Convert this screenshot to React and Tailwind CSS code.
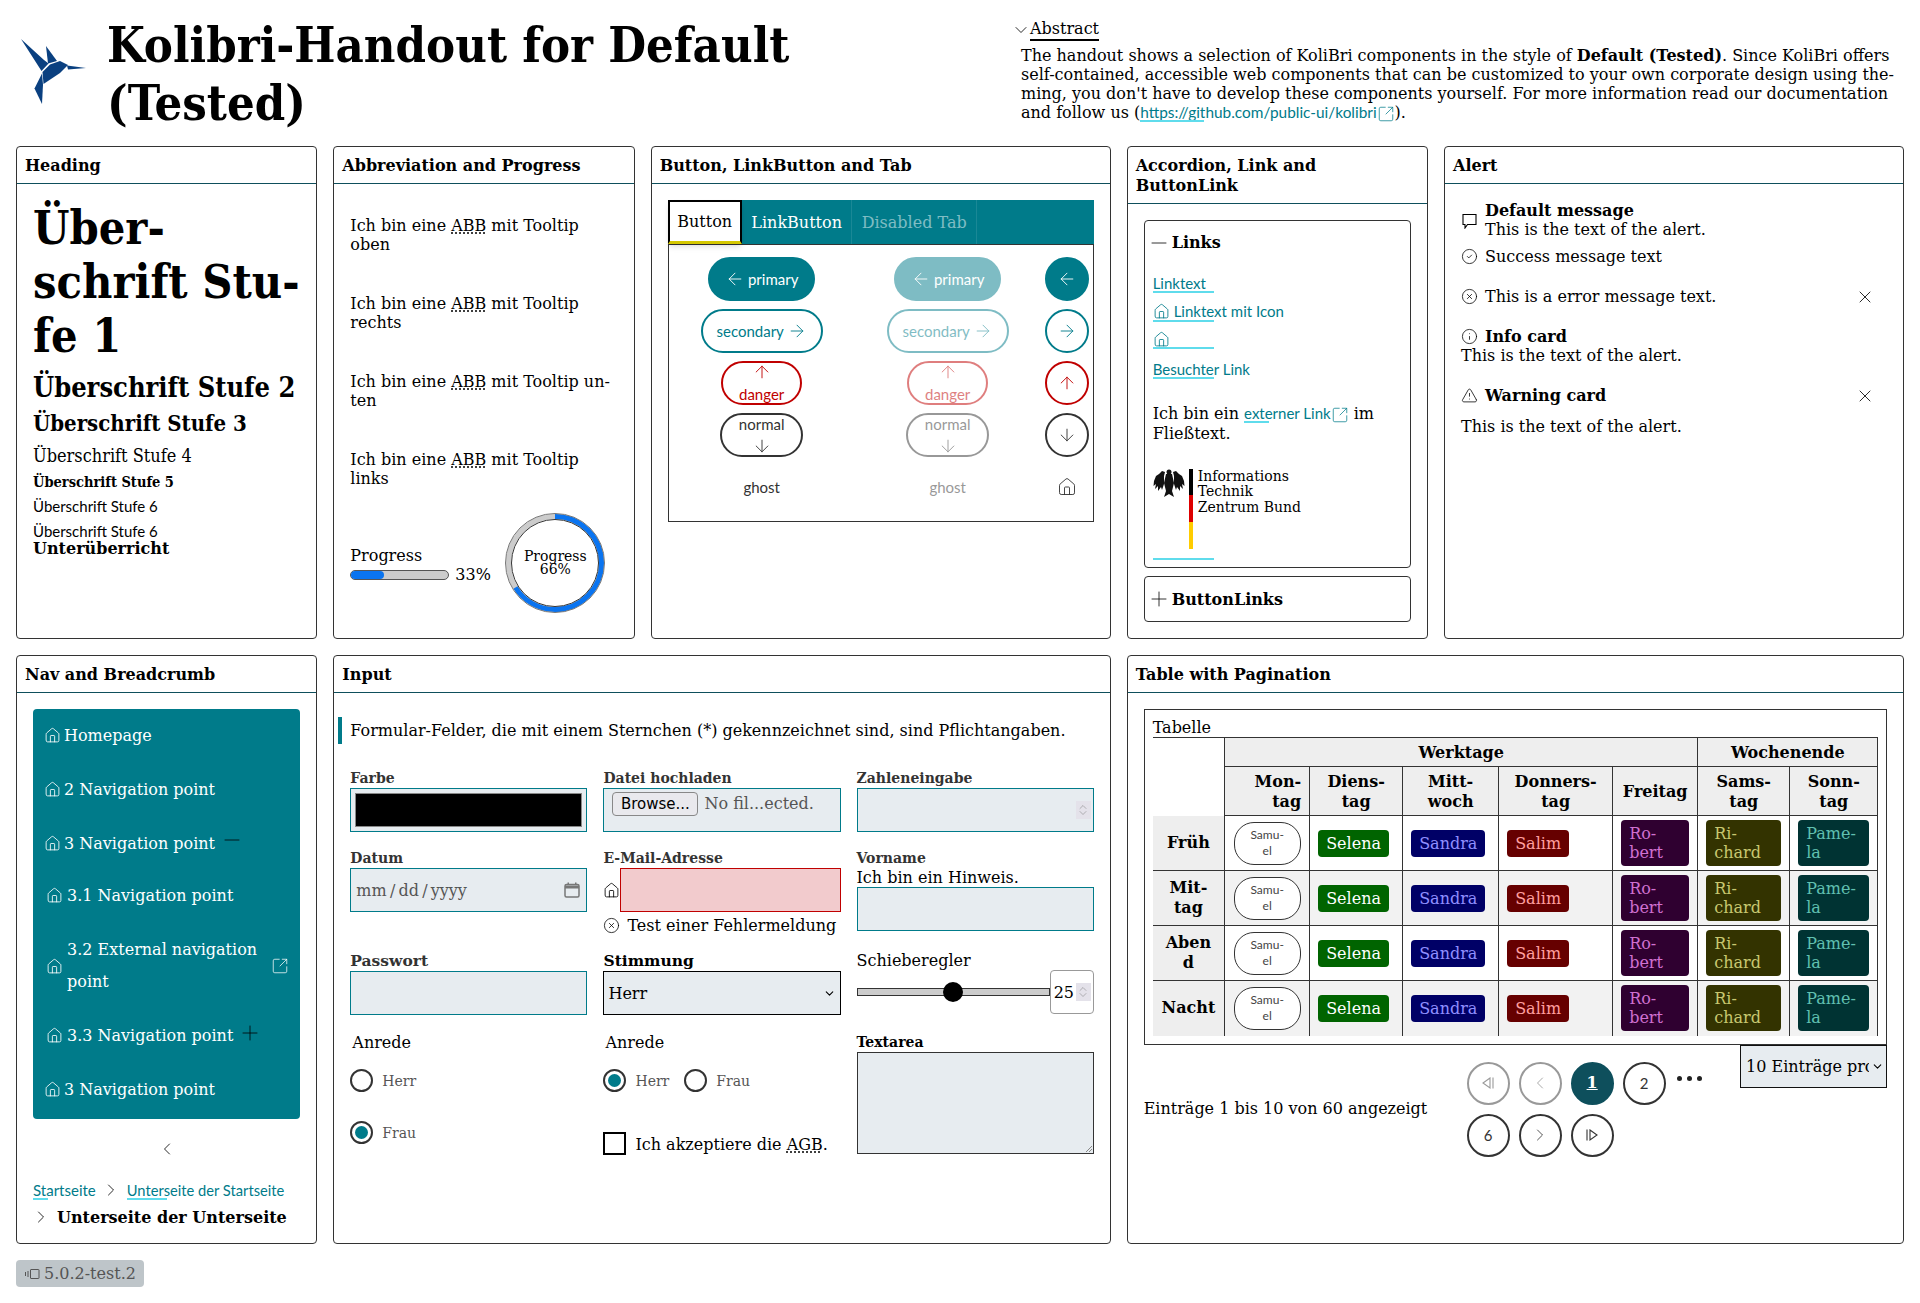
import { ArrowLeft, ArrowRight, ArrowUp, ArrowDown, House, ChevronDown, ChevronLeft, ChevronRight, ChevronUp, SquareArrowOutUpRight, Minus, Plus, X, CircleCheck, CircleX, Info, TriangleAlert } from "lucide-react";

const serif = "font-['DejaVu_Serif',serif]";
const head = "font-['DejaVu_Serif_Condensed','DejaVu_Serif',serif]";
const sans = "font-['Lato',sans-serif]";

function Hummingbird() {
  return (
    <svg width="70" height="68" viewBox="18 37 70 68" className="shrink-0">
      <g fill="#0a4080">
        <path d="M21 39 L44 60 L48.5 63.5 L41.5 71 Z" />
        <path d="M46 46 L57 61 L48 63.5 Z" />
        <path d="M42.5 72 L50 64.5 L60 61 L68 65 L60 73 L43.5 84 Z" />
        <path d="M67 65.5 L86 68 L68 69.5 Z" />
        <path d="M42 73.5 L34.5 88.5 L42 104 L43 84.5 Z" />
      </g>
    </svg>
  );
}

function Eagle() {
  return (
    <svg width="32" height="30" viewBox="0 0 32 30" className="shrink-0">
      <g fill="#111">
        <circle cx="16" cy="3" r="2.5" />
        <path d="M13 5 L19 5 L21 14 L19 22 L21 28 L16 25 L11 28 L13 22 L11 14 Z" />
        <path d="M12 3 L9 2 L6 5 L3 7 L1 12 L0.5 17 L3 15 L2 20 L5 17 L5 22 L8 18 L9 21 L11 15 L11 7 Z" />
        <path d="M20 3 L23 2 L26 5 L29 7 L31 12 L31.5 17 L29 15 L30 20 L27 17 L27 22 L24 18 L23 21 L21 15 L21 7 Z" />
      </g>
    </svg>
  );
}

function SpeechIcon() {
  return (
    <svg width="17" height="17" viewBox="0 0 17 17" fill="none" stroke="currentColor" strokeWidth="1.1" className="shrink-0">
      <path d="M2 2.5 H15 V12.5 H6.5 L4 16 V12.5 H2 Z" />
    </svg>
  );
}

function CalendarIcon() {
  return (
    <svg width="18" height="18" viewBox="0 0 18 18" fill="none" className="text-[#777]">
      <rect x="2" y="3.5" width="14" height="12.5" rx="1.5" stroke="currentColor" strokeWidth="1.5" />
      <path d="M2 4.5 H16 V7.5 H2 Z M4.5 1.5 H6 V4 H4.5 Z M12 1.5 H13.5 V4 H12 Z" fill="currentColor" />
    </svg>
  );
}

function Card({ title, span, children, bodyClass = "" }) {
  return (
    <section className={`${span} flex flex-col rounded border border-[#333] bg-white`}>
      <h2 className="border-b border-[#0e4f5c] px-2 pt-[9px] pb-[7px] text-base leading-[20px] font-bold">{title}</h2>
      <div className={`flex-1 ${bodyClass}`}>{children}</div>
    </section>
  );
}

function TextLink({ children, className = "text-[15px]", line = "w-[61px]" }) {
  return (
    <span className={`relative inline-block leading-[16px] text-[#007b8a] ${sans} ${className}`}>
      {children}
      <span className={`absolute bottom-[-2px] left-0 h-[2px] bg-[#5fdcec] ${line}`} />
    </span>
  );
}

function Abbr({ children }) {
  return <span className="underline decoration-dotted underline-offset-2">{children}</span>;
}

function Pill({ label, tone, icon: Icon, side, dim, w }) {
  const tones = {
    primary: "bg-[#007b8a] border-[#007b8a] text-white",
    secondary: "bg-white border-[#007b8a] text-[#007b8a]",
    danger: "bg-white border-[#c00000] text-[#c00000]",
    normal: "bg-white border-[#333] text-[#333]",
    ghost: "bg-white border-transparent text-[#333]",
  };
  return (
    <div
      className={`flex h-11 items-center justify-center rounded-full border-2 text-[15px] leading-[20px] ${sans} ${tones[tone]} ${w} ${
        dim ? "opacity-50" : ""
      } ${side === "top" || side === "bottom" ? "flex-col gap-[2px]" : "gap-[3px]"}`}
    >
      {Icon && (side === "left" || side === "top") && <Icon size={20} strokeWidth={1.1} className="shrink-0" />}
      {label && <span>{label}</span>}
      {Icon && (side === "right" || side === "bottom") && <Icon size={20} strokeWidth={1.1} className="shrink-0" />}
    </div>
  );
}

function ButtonColumn({ dim }) {
  return (
    <div className="flex flex-col items-center gap-[8px]">
      <Pill label="primary" tone="primary" icon={ArrowLeft} side="left" dim={dim} w="w-[107px]" />
      <Pill label="secondary" tone="secondary" icon={ArrowRight} side="right" dim={dim} w="w-[122px]" />
      <Pill label="danger" tone="danger" icon={ArrowUp} side="top" dim={dim} w="w-[81px]" />
      <Pill label="normal" tone="normal" icon={ArrowDown} side="bottom" dim={dim} w="w-[83px]" />
      <Pill label="ghost" tone="ghost" dim={dim} w="w-[83px]" />
    </div>
  );
}

function NavItem({ children, indent, after, className }) {
  return (
    <div className={`flex items-center text-white ${indent ? "pl-[13px]" : "pl-[11px]"} ${className}`}>
      <House size={17} strokeWidth={1.2} className={`shrink-0 ${indent ? "mr-[4px]" : "mr-[3px]"}`} />
      {children}
      {after}
    </div>
  );
}

function Field({ label, children, labelClass = "text-[14px] leading-[19px] font-bold text-[#333]" }) {
  return (
    <div>
      <div className={labelClass}>{label}</div>
      {children}
    </div>
  );
}

const inputBox = "h-11 w-full border border-[#007b8a] bg-[#e7ecf0]";

function Spin() {
  return (
    <span className="flex h-[18px] w-[15px] flex-col items-center justify-center bg-[#e4e2ea] text-[#777]">
      <ChevronUp size={12} strokeWidth={1} className="mb-[-3px]" />
      <ChevronDown size={12} strokeWidth={1} className="mt-[-3px]" />
    </span>
  );
}

function Radio({ checked, label }) {
  return (
    <div className="flex items-center gap-[9px] text-sm text-[#555]">
      <span className="flex h-[23px] w-[23px] items-center justify-center rounded-full border-2 border-[#333]">
        {checked && <span className="h-[13px] w-[13px] rounded-full bg-[#007b8a]" />}
      </span>
      {label}
    </div>
  );
}

function Th({ children, className = "text-center", ...rest }) {
  return (
    <th className={`border border-[#333] bg-[#eee] px-2 pt-[2px] font-bold leading-[20px] ${className}`} {...rest}>
      {children}
    </th>
  );
}

function Chip({ cls, className = "", children }) {
  return <span className={`block rounded text-left leading-[19px] ${cls} ${className}`}>{children}</span>;
}

function TableRow({ label, even, last }) {
  const cell = `border border-[#333] px-2 ${last ? "border-b-0" : ""} ${even ? "bg-[#f2f2f2]" : "bg-white"}`;
  return (
    <tr className="h-[55px]">
      <th className={`border-r border-b border-[#333] bg-[#eee] text-center leading-[20px] font-bold ${last ? "border-b-0" : ""}`}>{label}</th>
      <td className={`${cell} !px-0`}>
        <span className={`mx-auto flex h-[43px] w-[67px] items-center justify-center rounded-[20px] border border-[#333] bg-white text-center text-[12px] leading-[16px] text-[#444] ${sans}`}>
          Samu-
          <br />
          el
        </span>
      </td>
      <td className={cell}>
        <Chip cls="bg-[#006400] text-white" className="w-[71px] py-1 pl-2">Selena</Chip>
      </td>
      <td className={cell}>
        <Chip cls="bg-[#000066] text-[#8f8fff]" className="w-[74px] py-1 pl-2">Sandra</Chip>
      </td>
      <td className={cell}>
        <Chip cls="bg-[#660000] text-[#ff9f9f]" className="w-[62px] py-1 pl-2">Salim</Chip>
      </td>
      <td className={cell}>
        <Chip cls="bg-[#2f0030] text-[#d070d0]" className="w-[68px] py-1 pl-2">Ro-<br />bert</Chip>
      </td>
      <td className={cell}>
        <Chip cls="bg-[#333300] text-[#c8c870]" className="w-[75px] py-1 pl-2">Ri-<br />chard</Chip>
      </td>
      <td className={cell}>
        <Chip cls="bg-[#003333] text-[#60c0b0]" className="w-[71px] py-1 pl-2">Pame-<br />la</Chip>
      </td>
    </tr>
  );
}

function Page({ children, dim, active }) {
  return (
    <span
      className={`flex h-[43px] w-[43px] items-center justify-center rounded-full border-2 ${
        active ? `border-[#0e4f5c] bg-[#0e4f5c] text-base font-bold text-white underline ${serif}` : dim ? `border-[#999] text-[15px] text-[#999] ${sans}` : `border-[#333] text-[15px] text-[#333] ${sans}`
      }`}
    >
      {children}
    </span>
  );
}

function FirstIcon() {
  return (
    <svg width="14" height="14" viewBox="0 0 14 14" fill="none" stroke="currentColor" strokeWidth="1.1">
      <path d="M9 2 L2 7 L9 12 Z M12 1.5 V12.5" />
    </svg>
  );
}

function LastIcon() {
  return (
    <svg width="14" height="14" viewBox="0 0 14 14" fill="none" stroke="currentColor" strokeWidth="1.1">
      <path d="M5 2 L12 7 L5 12 Z M2 1.5 V12.5" />
    </svg>
  );
}

function VersionIcon() {
  return (
    <svg width="16" height="14" viewBox="0 0 16 14" fill="none" stroke="currentColor" strokeWidth="1">
      <rect x="6.5" y="2.5" width="8.5" height="9" rx="0.5" />
      <path d="M4 4 V10 M1.5 5 V9" />
    </svg>
  );
}

export default function App() {
  return (
    <div className={`flex min-h-[1303px] flex-col p-4 text-base leading-[19px] text-black ${serif}`}>
      {/* Header */}
      <header className="flex h-[130px] items-start">
        <div className="mt-[21px] mr-[19px] ml-[2px]">
          <Hummingbird />
        </div>
        <h1 className={`text-[48.5px] leading-[58px] font-bold ${head}`}>
          Kolibri-Handout for Default
          <br />
          (Tested)
        </h1>
        <div className="mt-[3px] ml-auto w-[893px]">
          <div className="flex items-center">
            <ChevronDown size={20} strokeWidth={1} className="mr-[-1px]" />
            <span className="border-b-2 border-black leading-[20px]">Abstract</span>
          </div>
          <p className="mt-[5px] ml-[10px]">
            The handout shows a selection of KoliBri components in the style of <b>Default (Tested)</b>. Since KoliBri offers self-contained, accessible web components that can be customized to your own corporate design using the-
            <br />
            ming, you don't have to develop these components yourself. For more information read our documentation and follow us (
            <TextLink line="w-[64px]" className="text-[15.4px]">https://github.com/public-ui/kolibri</TextLink>
            <SquareArrowOutUpRight size={18} strokeWidth={1} className="inline text-[#007b8a]" />).
          </p>
        </div>
      </header>

      <main className="grid flex-1 grid-cols-12 grid-rows-[493px_589px] gap-4">
        {/* Heading */}
        <Card title="Heading" span="col-span-2" bodyClass="pr-[8px] pl-[16px] pt-[17px]">
          <div className={`text-[46.5px] leading-[54px] font-bold ${head}`}>
            Über-
            <br />
            schrift Stu-
            <br />
            fe 1
          </div>
          <div className={`mt-[9px] whitespace-nowrap text-[27px] leading-[32px] font-bold ${head}`}>Überschrift Stufe 2</div>
          <div className={`mt-[5px] text-[22px] leading-[28px] font-bold ${head}`}>Überschrift Stufe 3</div>
          <div className={`mt-[7px] text-[18px] leading-[24px] ${head}`}>Überschrift Stufe 4</div>
          <div className={`mt-[4px] text-[14.5px] leading-[20px] font-bold ${head}`}>Überschrift Stufe 5</div>
          <div className={`mt-[4px] text-[15px] leading-[20px] ${sans}`}>Überschrift Stufe 6</div>
          <div className={`mt-[5px] text-[15px] leading-[20px] ${sans}`}>Überschrift Stufe 6</div>
          <div className="mt-[1px] leading-[14px] font-bold">Unterüberricht</div>
        </Card>

        {/* Abbreviation and Progress */}
        <Card title="Abbreviation and Progress" span="col-span-2" bodyClass="px-[16px] pt-[32px]">
          <div className="flex flex-col gap-[40px]">
            <p>Ich bin eine <Abbr>ABB</Abbr> mit Tooltip oben</p>
            <p>Ich bin eine <Abbr>ABB</Abbr> mit Tooltip rechts</p>
            <p>Ich bin eine <Abbr>ABB</Abbr> mit Tooltip un-<br />ten</p>
            <p>Ich bin eine <Abbr>ABB</Abbr> mit Tooltip links</p>
          </div>
          <div className="mt-[25px] flex items-center">
            <div className="w-[155px] pt-[4px]">
              <div>Progress</div>
              <div className="flex items-center gap-[6px]">
                <div className="h-[10px] w-[99px] rounded-full border border-[#555] bg-[#ccc]">
                  <div className="h-full w-[33px] rounded-full bg-[#0a74f0]" />
                </div>
                33%
              </div>
            </div>
            <div className="relative h-[100px] w-[100px] shrink-0">
              <svg width="100" height="100" viewBox="0 0 100 100" fill="none">
                <circle cx="50" cy="50" r="46.5" stroke="#ccc" strokeWidth="5" />
                <circle cx="50" cy="50" r="46.5" stroke="#0a74f0" strokeWidth="5" strokeDasharray="193 292" transform="rotate(-90 50 50)" />
                <circle cx="50" cy="50" r="49.5" stroke="#777" strokeWidth="1" />
                <circle cx="50" cy="50" r="43.5" stroke="#333" strokeWidth="1" />
              </svg>
              <div className="absolute inset-0 flex flex-col items-center justify-center text-sm leading-[13px]">
                <span>Progress</span>
                <span>66%</span>
              </div>
            </div>
          </div>
        </Card>

        {/* Button, LinkButton and Tab */}
        <Card title="Button, LinkButton and Tab" span="col-span-3" bodyClass="px-4 pt-4">
          <div className="flex h-[44px] bg-[#007b8a]">
            <span className="flex w-[74px] items-center justify-center border-2 border-black border-b-[3px] border-b-[#d4c700] bg-white shadow-md">Button</span>
            <span className="flex w-[110px] items-center justify-center border-r border-[#1a8896] pl-[1px] text-white">LinkButton</span>
            <span className="flex w-[125px] items-center justify-center border-r border-[#1a8896] pl-[1px] text-white/50">Disabled Tab</span>
          </div>
          <div className="flex h-[278px] border border-[#333] pt-[12px]">
            <div className="w-[186px]">
              <ButtonColumn />
            </div>
            <div className="w-[186px]">
              <ButtonColumn dim />
            </div>
            <div className="flex flex-1 flex-col items-center gap-[8px]">
              <Pill tone="primary" icon={ArrowLeft} side="left" w="w-11" />
              <Pill tone="secondary" icon={ArrowRight} side="left" w="w-11" />
              <Pill tone="danger" icon={ArrowUp} side="left" w="w-11" />
              <Pill tone="normal" icon={ArrowDown} side="left" w="w-11" />
              <Pill tone="ghost" icon={House} side="left" w="w-11" />
            </div>
          </div>
        </Card>

        {/* Accordion, Link and ButtonLink */}
        <Card title={<>Accordion, Link and<br />ButtonLink</>} span="col-span-2" bodyClass="px-4 pt-[16px]">
          <div className="h-[348px] rounded-sm border border-[#333] px-2 pt-[12px]">
            <div className="flex items-center gap-[1px] font-bold">
              <Minus size={24} strokeWidth={0.8} className="my-[-3px] ml-[-6px]" /> Links
            </div>
            <div className="mt-[23px] flex flex-col text-sm leading-[16px]">
              <TextLink className="w-fit text-[15px]">Linktext</TextLink>
              <TextLink className="mt-[12px] w-fit text-[15px]">
                <House size={17} strokeWidth={1.2} className="mr-1 inline align-[-3px]" />
                Linktext mit Icon
              </TextLink>
              <TextLink className="mt-[11px] h-[16px] w-fit text-[15px]">
                <House size={17} strokeWidth={1.2} className="inline align-top" />
              </TextLink>
              <TextLink className="mt-[14px] w-fit text-[15px]">Besuchter Link</TextLink>
            </div>
            <p className="mt-[27px]">
              Ich bin ein <TextLink line="w-[25px]">externer Link</TextLink>
              <SquareArrowOutUpRight size={18} strokeWidth={1} className="inline text-[#007b8a]" /> im Fließtext.
            </p>
            <div className="mt-[26px] flex h-[80px] text-sm leading-[15.5px]">
              <Eagle />
              <div className="mr-[5px] ml-[4px] flex w-[4px] flex-col">
                <span className="flex-1 bg-black" />
                <span className="flex-1 bg-[#dd0000]" />
                <span className="flex-1 bg-[#ffcc00]" />
              </div>
              <div>
                Informations
                <br />
                Technik
                <br />
                Zentrum Bund
              </div>
            </div>
            <div className="mt-[9px] h-[2px] w-[61px] bg-[#5fdcec]" />
          </div>
          <div className="mt-[8px] flex h-[46px] items-center gap-[1px] rounded-sm border border-[#333] px-2 font-bold">
            <Plus size={24} strokeWidth={0.8} className="ml-[-6px]" /> ButtonLinks
          </div>
        </Card>

        {/* Alert */}
        <Card title="Alert" span="col-span-3" bodyClass="px-4 pt-[17px]">
          <div className="flex items-center gap-[7px]">
            <SpeechIcon />
            <div>
              <b>Default message</b>
              <br />
              This is the text of the alert.
            </div>
          </div>
          <div className="mt-[8px] flex items-center gap-[7px]">
            <CircleCheck size={17} strokeWidth={1.1} /> Success message text
          </div>
          <div className="mt-[21px] flex h-[19px] items-center gap-[7px] pr-[12px]">
            <CircleX size={17} strokeWidth={1.1} /> <span className="flex-1">This is a error message text.</span>
            <X size={20} strokeWidth={1} />
          </div>
          <div className="mt-[21px] flex items-center gap-[7px]">
            <Info size={17} strokeWidth={1.1} /> <b>Info card</b>
          </div>
          <div>This is the text of the alert.</div>
          <div className="mt-[21px] flex h-[19px] items-center gap-[7px] pr-[12px]">
            <TriangleAlert size={17} strokeWidth={1.1} /> <b className="flex-1">Warning card</b>
            <X size={20} strokeWidth={1} />
          </div>
          <div className="mt-[12px]">This is the text of the alert.</div>
        </Card>

        {/* Nav and Breadcrumb */}
        <Card title="Nav and Breadcrumb" span="col-span-2" bodyClass="px-4 pt-4">
          <div className="rounded-sm bg-[#007b8a]">
            <NavItem className="h-[52px]">Homepage</NavItem>
            <NavItem className="h-[56px]">2 Navigation point</NavItem>
            <NavItem className="h-[52px]" after={<Minus size={24} strokeWidth={0.8} className="mb-[6px] ml-[5px] text-black" />}>3 Navigation point</NavItem>
            <NavItem indent className="h-[52px]">3.1 Navigation point</NavItem>
            <NavItem indent className="h-[90px] leading-[32px]">
              <span className="w-[194px]">3.2 External navigation point</span>
              <SquareArrowOutUpRight size={18} strokeWidth={1} className="ml-[10px]" />
            </NavItem>
            <NavItem indent className="h-[49px]" after={<Plus size={24} strokeWidth={0.8} className="mb-[6px] ml-[5px] text-black" />}>3.3 Navigation point</NavItem>
            <NavItem className="h-[59px]">3 Navigation point</NavItem>
          </div>
          <div className="mt-[20px] flex justify-center">
            <ChevronLeft size={20} strokeWidth={1} />
          </div>
          <div className="mt-[21px] flex items-center">
            <TextLink line="w-[15px]">Startseite</TextLink>
            <ChevronRight size={20} strokeWidth={1} className="mr-[6px] ml-[5px]" />
            <TextLink line="w-[40px]" className="text-[14.7px]">Unterseite der Startseite</TextLink>
          </div>
          <div className="mt-[7px] flex items-center font-bold">
            <ChevronRight size={20} strokeWidth={1} className="mr-[6px] ml-[-2px]" />
            Unterseite der Unterseite
          </div>
        </Card>

        {/* Input */}
        <Card title="Input" span="col-span-5" bodyClass="px-4 pt-[24px]">
          <div className="ml-[-12px] border-l-4 border-[#007b8a] py-[4px] pl-[8px]">
            Formular-Felder, die mit einem Sternchen (*) gekennzeichnet sind, sind Pflichtangaben.
          </div>
          <div className="mt-[25px] grid grid-cols-3 gap-x-4">
            <div>
              <Field label="Farbe">
                <div className={`${inputBox} p-1`}><div className="h-full border border-[#888] bg-black" /></div>
              </Field>
              <div className="mt-[17px]">
                <Field label="Datum">
                  <div className={`${inputBox} flex items-center justify-between px-[5px] text-[#555]`}>
                    mm{"\u2009"}/{"\u2009"}dd{"\u2009"}/{"\u2009"}yyyy
                    <CalendarIcon />
                  </div>
                </Field>
              </div>
              <div className="mt-[40px]">
                <Field label="Passwort" labelClass="pb-[2px] text-[15.5px] leading-[17px] font-bold text-[#333]"><div className={inputBox} /></Field>
              </div>
              <div className="mt-[18px] ml-[2px]">Anrede</div>
              <div className="mt-[17px]"><Radio label="Herr" /></div>
              <div className="mt-[29px]"><Radio checked label="Frau" /></div>
            </div>
            <div>
              <Field label="Datei hochladen">
                <div className={`${inputBox} flex items-start pt-[3px] pl-[8px] text-[#555]`}>
                  <span className="mr-[6px] flex h-[24px] w-[86px] items-center justify-center rounded border border-[#888] bg-[#e9e9ed] font-['DejaVu_Sans',sans-serif] text-[15px] text-black">Browse...</span>
                  <span className="leading-[24px]">No fil...ected.</span>
                </div>
              </Field>
              <div className="mt-[17px]">
                <Field label="E-Mail-Adresse">
                  <div className="flex items-center">
                    <House size={17} strokeWidth={1.2} className="shrink-0" />
                    <div className="h-11 flex-1 border border-[#c00000] bg-[#f2cbcd]" />
                  </div>
                  <div className="mt-[4px] flex items-center gap-[7px]">
                    <CircleX size={17} strokeWidth={1.1} /> Test einer Fehlermeldung
                  </div>
                </Field>
              </div>
              <div className="mt-[17px]">
                <Field label="Stimmung" labelClass="pb-[2px] text-[15.5px] leading-[17px] font-bold">
                  <div className="flex h-11 items-center justify-between border border-black bg-[#e7ecf0] px-[4px]">
                    Herr
                    <ChevronDown size={13} strokeWidth={2} />
                  </div>
                </Field>
              </div>
              <div className="mt-[18px] ml-[2px]">Anrede</div>
              <div className="mt-[17px] flex gap-[15px]">
                <Radio checked label="Herr" />
                <Radio label="Frau" />
              </div>
              <div className="mt-[40px] flex items-center gap-[9px]">
                <span className="h-[23px] w-[23px] border-2 border-black" />
                <span className="pt-[1px]">Ich akzeptiere die <Abbr>AGB</Abbr>.</span>
              </div>
            </div>
            <div>
              <Field label="Zahleneingabe">
                <div className={`${inputBox} flex items-center justify-end pr-[2px]`}>
                  <Spin />
                </div>
              </Field>
              <div className="mt-[17px]">
                <Field label="Vorname">
                  <div className="leading-[19px]">Ich bin ein Hinweis.</div>
                  <div className={inputBox} />
                </Field>
              </div>
              <div className="mt-[20px] leading-[19px]">Schieberegler</div>
              <div className="flex items-center">
                <div className="relative h-[8px] flex-1 border border-[#333] bg-[#ccc]">
                  <span className="absolute top-[-7px] left-[85px] h-[20px] w-[20px] rounded-full bg-black" />
                </div>
                <div className="flex h-11 w-[44px] items-center justify-between rounded-sm border border-[#999] pr-[2px] pl-[3px]">
                  25
                  <Spin />
                </div>
              </div>
              <div className="mt-[19px]">
                <Field label="Textarea" labelClass="text-[14px] leading-[19px] font-bold">
                  <div className="relative h-[102px] border border-[#333] bg-[#e7ecf0]">
                    <svg width="6" height="6" viewBox="0 0 6 6" className="absolute right-[1px] bottom-[1px]" stroke="#888" strokeWidth="1">
                      <path d="M0 6 L6 0 M3 6 L6 3" />
                    </svg>
                  </div>
                </Field>
              </div>
            </div>
          </div>
        </Card>

        {/* Table with Pagination */}
        <Card title="Table with Pagination" span="col-span-5" bodyClass="px-4 pt-[16px]">
          <div className="border border-[#333] px-2 pt-2 pb-2">
            <div className="leading-[19px]">Tabelle</div>
            <table className="w-full table-fixed border-collapse">
              <colgroup>
                <col className="w-[72px]" />
                <col className="w-[85px]" />
                <col className="w-[93px]" />
                <col className="w-[96px]" />
                <col className="w-[114px]" />
                <col className="w-[85px]" />
                <col className="w-[92px]" />
                <col className="w-[88px]" />
              </colgroup>
              <thead>
                <tr className="h-[29px]">
                  <td rowSpan={2} className="border-t border-r border-[#333]" />
                  <Th colSpan={5}>Werktage</Th>
                  <Th colSpan={2}>Wochenende</Th>
                </tr>
                <tr className="h-[49px]">
                  <Th className="text-right">Mon-<br />tag</Th>
                  <Th>Diens-<br />tag</Th>
                  <Th>Mitt-<br />woch</Th>
                  <Th>Donners-<br />tag</Th>
                  <Th>Freitag</Th>
                  <Th>Sams-<br />tag</Th>
                  <Th>Sonn-<br />tag</Th>
                </tr>
              </thead>
              <tbody>
                <TableRow label="Früh" />
                <TableRow label={<>Mit-<br />tag</>} even />
                <TableRow label={<>Aben<br />d</>} />
                <TableRow label="Nacht" even last />
              </tbody>
            </table>
          </div>
          <div className="flex items-start">
            <div className="mt-[15px] w-[323px] self-center">Einträge 1 bis 10 von 60 angezeigt</div>
            <div className="mt-[17px] flex w-[250px] flex-wrap items-start gap-x-[9px] gap-y-[9px]">
              <Page dim><FirstIcon /></Page>
              <Page dim><ChevronLeft size={20} strokeWidth={1} /></Page>
              <Page active>1</Page>
              <Page>2</Page>
              <span className="mt-[14px] flex gap-[5px] pl-[2px]">
                <span className="h-[5px] w-[5px] rounded-full bg-[#222]" />
                <span className="h-[5px] w-[5px] rounded-full bg-[#222]" />
                <span className="h-[5px] w-[5px] rounded-full bg-[#222]" />
              </span>
              <Page>6</Page>
              <Page><ChevronRight size={20} strokeWidth={1} /></Page>
              <Page><LastIcon /></Page>
            </div>
            <div className="ml-auto flex h-[43px] w-[147px] items-center overflow-hidden border border-[#111] bg-[#e7ecf0] pr-[2px] pl-[5px]">
              <span className="flex-1 overflow-hidden whitespace-nowrap">10 Einträge pro Seite</span>
              <ChevronDown size={13} strokeWidth={2} className="ml-[2px] shrink-0" />
            </div>
          </div>
        </Card>
      </main>

      <div className="mt-4 flex h-[27px] w-[128px] items-center gap-1 rounded bg-[#bec5c9] pl-2 text-[#555]">
        <VersionIcon />
        5.0.2-test.2
      </div>
    </div>
  );
}
